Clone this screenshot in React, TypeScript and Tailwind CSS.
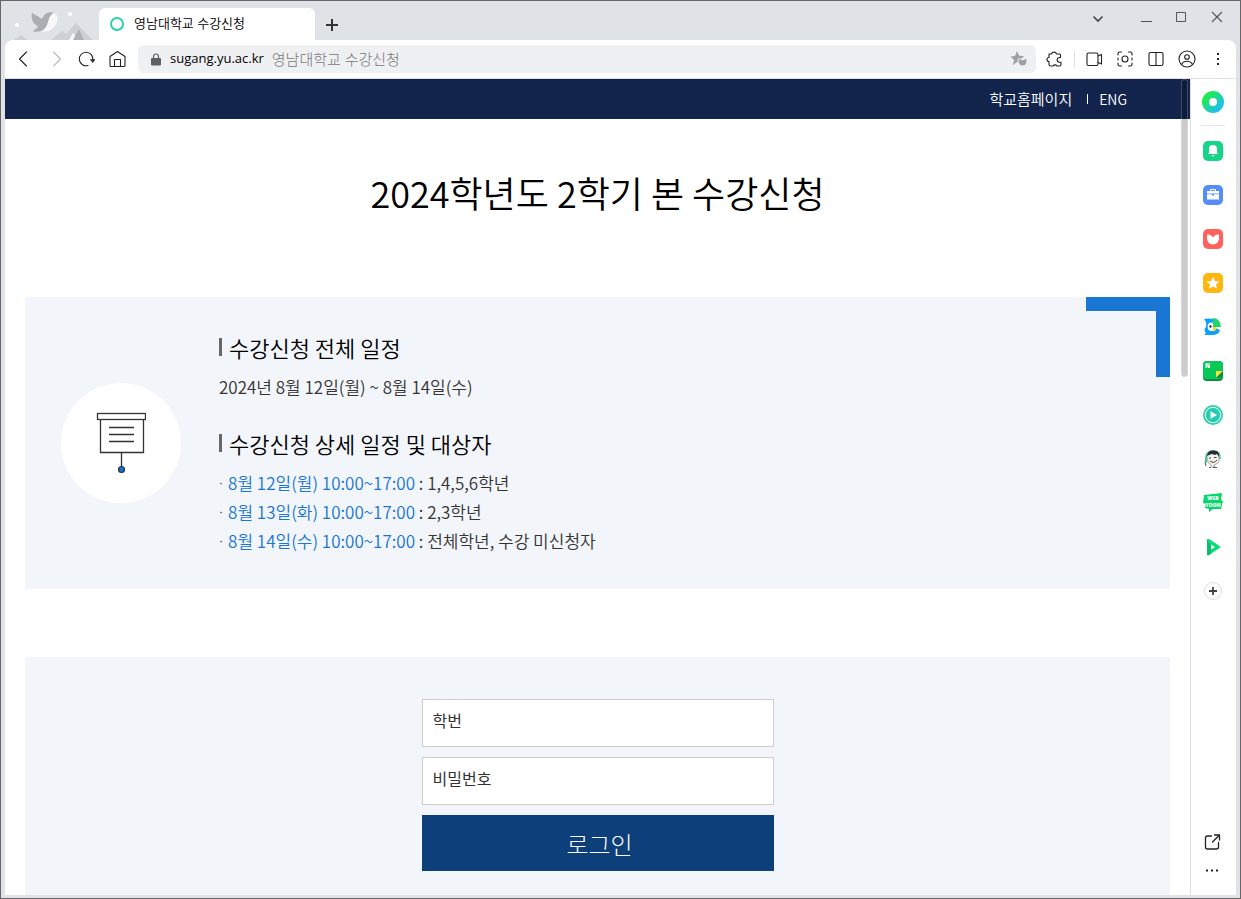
import { useState } from "react"
import type { ReactNode } from "react"

const schedule = [
  { time: "8월 12일(월) 10:00~17:00", target: "1,4,5,6학년" },
  { time: "8월 13일(화) 10:00~17:00", target: "2,3학년" },
  { time: "8월 14일(수) 10:00~17:00", target: "전체학년, 수강 미신청자" },
]

const line = {
  fill: "none",
  stroke: "#222",
  strokeWidth: 1.1,
  strokeLinecap: "round" as const,
  strokeLinejoin: "round" as const,
}

function IconButton({ label, className = "", children }: { label: string; className?: string; children: ReactNode }) {
  return (
    <button type="button" aria-label={label} className={`flex shrink-0 items-center justify-center ${className}`}>
      {children}
    </button>
  )
}

function WhaleArt() {
  return (
    <svg width="84" height="32" viewBox="0 0 84 32" className="self-end" aria-hidden="true">
      <path d="M5 32 L12 27 L19 32Z" fill="#cdd0d4" />
      <path d="M42 32 L53 23 L57 26 L67 15 L84 32Z" fill="#cdd0d4" />
      <path d="M60 32 L64 24.500 L69 32Z" fill="#f5f6f7" />
      <path d="M64 32 L70 21 L75 32Z" fill="#aeb1b5" />
      <path d="M40 5 C50 3 51 14 44 20 C41 23 36 24 31 23.500 C38 20 36 13 40 5Z" fill="#f8f8f9" />
      <path d="M23 4.500 C25 7 27 7 30 9 C32 11 33 11 34 9 C36 5 40 3.500 45 4.800 C40 7 40 12 38 17 C36 22 32 24.500 24 23.500 C24 22 28 21 29 18 C23 16 22 9 23 4.500Z" fill="#aaadb2" />
      <circle cx="61" cy="6" r="2" fill="#fff" />
      <circle cx="8" cy="17" r="2" fill="#fff" />
    </svg>
  )
}

function TitleBar() {
  return (
    <div className="flex h-[39px] shrink-0 items-stretch">
      <div className="flex w-[98px] shrink-0 pl-2">
        <WhaleArt />
      </div>
      <div className="mt-[7px] flex w-[216px] shrink-0 items-center gap-[10px] rounded-t-md bg-white pl-[11px]">
        <svg width="14" height="14" viewBox="0 0 14 14" aria-hidden="true">
          <circle cx="7" cy="7" r="6" fill="none" stroke="#27d3ad" strokeWidth="2" />
        </svg>
        <span className="text-[13px] font-[350] text-black">영남대학교 수강신청</span>
      </div>
      <IconButton label="새 탭" className="ml-[10px] mt-2 w-[14px]">
        <svg width="12" height="12" viewBox="0 0 12 12">
          <path d="M6 0V12M0 6H12" stroke="#333" strokeWidth="2" />
        </svg>
      </IconButton>
      <div className="ml-auto flex items-start pr-[17px] pt-[10px]">
        <IconButton label="탭 검색" className="mr-9 h-3 pt-[3px]">
          <svg width="12" height="8" viewBox="0 0 12 8">
            <path d="M1.500 1.500L6 6L10.500 1.500" fill="none" stroke="#444" strokeWidth="1.600" />
          </svg>
        </IconButton>
        <IconButton label="최소화" className="mr-[23px] h-3">
          <svg width="12" height="12" viewBox="0 0 12 12">
            <path d="M1 10.500H12" stroke="#555" />
          </svg>
        </IconButton>
        <IconButton label="최대화" className="mr-6 h-3">
          <svg width="12" height="12" viewBox="0 0 12 12">
            <path d="M1.500 1.500H10.500V10.500H1.500Z" fill="none" stroke="#555" />
          </svg>
        </IconButton>
        <IconButton label="닫기" className="h-3">
          <svg width="12" height="12" viewBox="0 0 12 12">
            <path d="M1 1L11 11M11 1L1 11" stroke="#555" strokeWidth="1.100" />
          </svg>
        </IconButton>
      </div>
    </div>
  )
}

function Toolbar() {
  return (
    <div className="flex h-[39px] shrink-0 items-center rounded-t-lg border-b border-[#dfe2e5] bg-white pl-[10px] pr-[9px]">
      <div className="flex items-center gap-[13px]">
        <IconButton label="뒤로">
          <svg width="18" height="18" viewBox="0 0 18 18" {...line}>
            <path d="M11.500 2L4.500 9L11.500 16" />
          </svg>
        </IconButton>
        <IconButton label="앞으로">
          <svg width="18" height="18" viewBox="0 0 18 18" {...line} stroke="#b9b9b9">
            <path d="M7.500 2L14.500 9L7.500 16" />
          </svg>
        </IconButton>
        <IconButton label="새로고침">
          <svg width="18" height="18" viewBox="0 0 18 18" {...line}>
            <path d="M11 15.500A6.800 6.800 0 1 1 15.800 10" />
            <path d="M13.500 9.500H18L15.800 12.500Z" fill="#222" strokeWidth="0.500" />
          </svg>
        </IconButton>
        <IconButton label="홈">
          <svg width="18" height="18" viewBox="0 0 18 18" {...line}>
            <path d="M2 6.500L9.500 1.500L17 6.500V15.500Q17 16.500 16 16.500H3Q2 16.500 2 15.500Z" />
            <path d="M6.500 16V9.500H12.500V16" />
          </svg>
        </IconButton>
      </div>

      {/* Address bar */}
      <div className="ml-3 flex h-7 min-w-0 flex-1 items-center rounded-md bg-[#eff0f2] pl-[13px] pr-2">
        <svg width="10" height="13" viewBox="0 0 10 13" className="mr-[9px] shrink-0" aria-hidden="true">
          <path d="M2.500 6V3.500A2.500 2.500 0 0 1 7.500 3.500V6" fill="none" stroke="#606060" strokeWidth="1.200" />
          <rect y="5" width="10" height="7.500" rx="1" fill="#606060" />
        </svg>
        <span className="whitespace-nowrap text-[13px] text-black">sugang.yu.ac.kr</span>
        <span className="ml-2 truncate text-[15px] font-light text-[#777]">영남대학교 수강신청</span>
        <IconButton label="즐겨찾기" className="ml-auto">
          <svg width="18" height="16" viewBox="0 0 18 16" fill="#a0a0a0">
            <path d="M7 0L9.200 4.800L14 5.300L10.500 8.500L11 13L7 11L3 14L4 9L0.500 5.500L5 5Z" />
            <path d="M8 8Q10 7 12.500 9Q15 7 17 8Q17.500 15 12.500 15Q8 15 8 8Z" stroke="#eff0f2" />
          </svg>
        </IconButton>
      </div>

      <div className="ml-[10px] flex items-center gap-[13px]">
        <IconButton label="확장앱">
          <svg width="18" height="18" viewBox="0 0 18 18" {...line}>
            <path d="M3 4H5.500A2.600 2.600 0 0 1 10.500 4H13.500Q14.500 4 14.500 5V7.500H13.500A2.300 2.300 0 0 0 13.500 12.200H15V14.500Q15 16 13.500 16H11A2.300 2.300 0 0 0 7 16H4.500Q3 16 3 14.500V11.500A2 2 0 0 1 3 7.500Z" />
          </svg>
        </IconButton>
        <div className="-mx-[3px] h-4 w-px bg-[#dcdfe2]" />
        <IconButton label="녹화">
          <svg width="18" height="18" viewBox="0 0 18 18" {...line}>
            <rect x="2" y="3" width="11" height="12.500" rx="1.500" />
            <path d="M13 6L16.500 4.500V14L13 12.500" />
          </svg>
        </IconButton>
        <IconButton label="캡처">
          <svg width="18" height="18" viewBox="0 0 18 18" {...line}>
            <path d="M2 5V3.500Q2 2 3.500 2H5.500M12.500 2H14.500Q16 2 16 3.500V5M16 13V14.500Q16 16 14.500 16H12.500M5.500 16H3.500Q2 16 2 14.500V13M2 8V10M16 8V10" />
            <circle cx="9" cy="9" r="3" />
          </svg>
        </IconButton>
        <IconButton label="사이드바">
          <svg width="18" height="18" viewBox="0 0 18 18" {...line}>
            <rect x="2" y="2.500" width="14" height="13" rx="1.500" />
            <path d="M9 2.500V15.500" />
          </svg>
        </IconButton>
        <IconButton label="프로필">
          <svg width="18" height="18" viewBox="0 0 18 18" {...line}>
            <circle cx="9" cy="9" r="8" />
            <circle cx="9" cy="7" r="2.300" />
            <path d="M3.500 14.500Q5 11.200 9 11.200T14.500 14.500" />
          </svg>
        </IconButton>
        <IconButton label="메뉴">
          <svg width="18" height="18" viewBox="0 0 18 18" fill="#222">
            <path d="M8 3H10V5H8ZM8 8H10V10H8ZM8 13H10V15H8Z" />
          </svg>
        </IconButton>
      </div>
    </div>
  )
}

const apps = [
  {
    label: "알림",
    icon: (
      <>
        <rect width="20" height="20" rx="5" fill="#16d488" />
        <path d="M10 4Q14 4 14 8V11.500L15 13H5L6 11.500V8Q6 4 10 4ZM8.500 14H11.500Q10 17 8.500 14Z" fill="#fff" />
      </>
    ),
  },
  {
    label: "도구",
    icon: (
      <>
        <rect width="20" height="20" rx="5" fill="#568cfa" />
        <path d="M7.500 6V4.500H12.500V6" fill="none" stroke="#fff" />
        <path d="M4 6H16V8.500H4ZM4 9.300H9V10.500H11V9.300H16V14.500H4Z" fill="#fff" />
      </>
    ),
  },
  {
    label: "쇼핑",
    icon: (
      <>
        <rect width="20" height="20" rx="5" fill="#ff625e" />
        <path d="M4 5.500Q8 5 10 8.500Q12 5 16 5.500Q17 15 10 15.500Q3 15 4 5.500Z" fill="#fff" />
      </>
    ),
  },
  {
    label: "즐겨찾기 모음",
    icon: (
      <>
        <rect width="20" height="20" rx="5" fill="#ffb60e" />
        <path d="M10 4L11.900 8L16.300 8.500L13 11.400L14 15.800L10 13.500L6 15.800L7 11.400L3.700 8.500L8.100 8Z" fill="#fff" />
      </>
    ),
  },
  {
    label: "파파고",
    icon: (
      <>
        <path d="M1 2Q5 1 10 2V10L17 13Q16 18 9 18H2Q1 17 3 16Q0 13 3 10Q4 5 1 2Z" fill="#0aa0ff" />
        <ellipse cx="8.500" cy="9.800" rx="3.800" ry="4.200" fill="#fff" />
        <path d="M10 1Q17 1 18 10H10Z" fill="#20d669" />
        <circle cx="7.500" cy="9.500" r="1.200" fill="#16356c" />
        <path d="M10 10H13Q14 13 11 14.500Q9.500 13 10 10Z" fill="#ffd51a" />
      </>
    ),
  },
  {
    label: "메모",
    icon: (
      <>
        <rect width="20" height="20" rx="4" fill="#078e3e" />
        <rect width="20" height="18" rx="4" fill="#08c858" />
        <text x="2" y="7" fontSize="6" fontWeight="900" fill="#fff">N</text>
        <path d="M13 17V10H20Z" fill="#ffdf38" />
        <path d="M13 17L20 10V14Q19 17 16 17Z" fill="#078e3e" />
      </>
    ),
  },
  {
    label: "동영상",
    icon: (
      <>
        <circle cx="10" cy="10" r="10" fill="#29d2a0" />
        <circle cx="10" cy="10" r="7.700" fill="#25cbb2" stroke="#fff" />
        <path d="M7.500 6.200L14 10L7.500 13.800Z" fill="#fff" />
      </>
    ),
  },
  {
    label: "오디오",
    icon: (
      <>
        <path d="M3 11Q2 2 10 2T17 10" fill="none" stroke="#32c985" strokeWidth="1.500" />
        <path d="M4 7Q4 3 9 2.500Q15 1.500 16 7V12Q15 15 11 16L11.500 18H9L8 16Q4 14 4 7Z" fill="#f5eeea" stroke="#888" strokeWidth="0.700" />
        <path d="M4 7Q5 1 10 1.500Q17 1 16 8L14 5L12 6L9 5L6 6Z" fill="#292c38" />
        <path d="M6 9H8M11 8.500H13.500M7 12Q11 15 14 11" fill="none" stroke="#333" strokeWidth="0.900" />
        <path d="M2 9V13L4 14V9Z" fill="#36c98a" />
        <path d="M2 13L3 17M6 18.500H8M10 18.500H14" stroke="#555" />
      </>
    ),
  },
  {
    label: "웹툰",
    icon: (
      <>
        <path d="M1 2L19 0L18 7L20 8L18 16H10L6 19V16L2 15L3 11L0 10Z" fill="#07d768" />
        <text x="10" y="7" textAnchor="middle" fontSize="5" fontWeight="900" fill="#fff">WEB</text>
        <text x="10" y="14" textAnchor="middle" fontSize="5" fontWeight="900" fill="#fff">TOON</text>
      </>
    ),
  },
  {
    label: "시리즈온",
    icon: (
      <>
        <path d="M4 3Q4 1 6 2L16.500 9Q18 10 16.500 11L6 18Q4 19 4 17Z" fill="#08de73" />
        <path d="M4 3V17Q4 19 6 18L8 16.700V9Z" fill="#08bd68" />
        <path d="M8 7.500L12 10L8 12.500Z" fill="#fff" />
      </>
    ),
  },
]

function SideBar() {
  return (
    <aside className="flex w-[46px] shrink-0 flex-col items-center border-l border-[#dfe2e5] bg-white pb-[18px] pr-0.5 pt-3">
      <IconButton label="웨일">
        <svg width="22" height="22" viewBox="0 0 22 22">
          <defs>
            <linearGradient id="ring" x1="0" y1="0" x2="1" y2="1">
              <stop offset="0.150" stopColor="#1dea52" />
              <stop offset="0.900" stopColor="#20c0ee" />
            </linearGradient>
          </defs>
          <circle cx="11" cy="11" r="7.500" fill="none" stroke="url(#ring)" strokeWidth="7" />
        </svg>
      </IconButton>
      <div className="mt-3 h-px w-6 bg-[#e2e4e6]" />
      <div className="mt-[15px] flex flex-col gap-6">
        {apps.map((app) => (
          <IconButton key={app.label} label={app.label}>
            <svg width="20" height="20" viewBox="0 0 20 20">
              {app.icon}
            </svg>
          </IconButton>
        ))}
        <IconButton label="추가">
          <svg width="20" height="20" viewBox="0 0 20 20">
            <circle cx="10" cy="10" r="8.500" fill="#fff" stroke="#ddd" />
            <path d="M10 6V14M6 10H14" stroke="#3f4347" strokeWidth="1.800" />
          </svg>
        </IconButton>
      </div>
      <IconButton label="새 창으로 열기" className="mt-auto">
        <svg width="18" height="18" viewBox="0 0 18 18" {...line} strokeWidth={1.3}>
          <path d="M7.500 3H3.500Q1.500 3 1.500 5V14Q1.500 16 3.500 16H12.500Q14.500 16 14.500 14V9.500M10.500 2H15.500V7M15.500 2L8.500 9" />
        </svg>
      </IconButton>
      <IconButton label="더보기" className="mt-3">
        <svg width="14" height="14" viewBox="0 0 14 14" fill="#222">
          <path d="M0 6.500H2V8.500H0ZM5 6.500H7V8.500H5ZM10 6.500H12V8.500H10Z" />
        </svg>
      </IconButton>
    </aside>
  )
}

function SectionTitle({ children }: { children: ReactNode }) {
  return (
    <h2 className="flex items-center gap-[7px] text-[22px] font-[350] leading-[30px] text-black">
      <span className="h-[18px] w-[3px] bg-[#666]" />
      {children}
    </h2>
  )
}

function Page() {
  const [studentId, setStudentId] = useState("")
  const [password, setPassword] = useState("")

  return (
    <div className="min-w-0 flex-1 overflow-hidden bg-white font-['Noto_Sans_CJK_KR',sans-serif]">
      <header className="flex h-10 items-center justify-end gap-[11px] bg-[#12244b] pr-[63px] text-[15px] font-[350] leading-5 text-white">
        <a href="#home">학교홈페이지</a>
        <span className="ml-1 h-[10px] w-px bg-white" />
        <a href="#eng" className="text-sm leading-5">ENG</a>
      </header>

      <main className="px-5">
        <h1 className="pb-[81px] pt-[49px] text-center text-[36px] font-[350] leading-[48px] text-black">
          2024학년도 2학기 본 수강신청
        </h1>

        {/* Schedule */}
        <section className="flex h-[292px] items-center bg-[#f2f5fa]">
          <div className="ml-9 flex size-[120px] shrink-0 items-center justify-center rounded-full bg-white">
            <svg width="50" height="62" viewBox="0 0 50 62" fill="none" stroke="#333" aria-hidden="true">
              <path d="M4.500 7V40.500H47.500V7" strokeWidth="1.300" />
              <rect x="1.500" y="1.500" width="48" height="6" fill="#fff" strokeWidth="1.300" />
              <path d="M13 15.500H38M13 22.500H38M13 29.500H38M25.500 40.500V55" strokeWidth="1.300" />
              <circle cx="25.500" cy="57.500" r="3" fill="#0875dc" strokeWidth="1.200" />
            </svg>
          </div>
          <div className="ml-[38px] flex-1 text-[17px] leading-[29px] text-[#333]">
            <SectionTitle>수강신청 전체 일정</SectionTitle>
            <p className="mt-[10px] font-[350]">2024년 8월 12일(월) ~ 8월 14일(수)</p>
            <div className="mt-[27px]">
              <SectionTitle>수강신청 상세 일정 및 대상자</SectionTitle>
            </div>
            <ul className="mt-[10px] font-[350]">
              {schedule.map((item) => (
                <li key={item.time} className="flex gap-[5px]">
                  <span className="font-['Open_Sans',sans-serif]">·</span>
                  <p>
                    <span className="text-[#1976d2]">{item.time}</span> : {item.target}
                  </p>
                </li>
              ))}
            </ul>
          </div>
          <div className="h-20 w-[84px] self-start border-r-[14px] border-t-[14px] border-[#1976d2]" />
        </section>

        {/* Login */}
        <section className="mt-[68px] bg-[#f2f5fa] pb-16 pt-[42px]">
          <form className="mx-auto flex w-[352px] flex-col gap-[10px]" onSubmit={(e) => e.preventDefault()}>
            <input
              type="text"
              aria-label="학번"
              placeholder="학번"
              value={studentId}
              onChange={(e) => setStudentId(e.target.value)}
              className="h-12 border border-[#ccc] bg-white px-[10px] pb-1.5 text-[16px] text-[#333] placeholder:text-[#333]"
            />
            <input
              type="password"
              aria-label="비밀번호"
              placeholder="비밀번호"
              value={password}
              onChange={(e) => setPassword(e.target.value)}
              className="h-12 border border-[#ccc] bg-white px-[10px] pb-1.5 text-[16px] text-[#333] placeholder:text-[#333]"
            />
            <button type="submit" className="h-14 bg-[#0d3f7a] pl-1 pt-0.5 text-[24px] font-light text-white">
              로그인
            </button>
          </form>
        </section>
      </main>
    </div>
  )
}

export default function App() {
  return (
    <div className="flex h-screen flex-col overflow-hidden border border-[#666] bg-[#dfe2e7] font-['Open_Sans','Noto_Sans_CJK_KR',sans-serif]">
      <TitleBar />
      <div className="flex min-h-0 flex-1 flex-col px-1 pb-[3px]">
        <Toolbar />
        <div className="flex min-h-0 flex-1">
          <div className="relative flex min-w-0 flex-1">
            <Page />
            {/* Scrollbar thumb */}
            <div className="absolute right-[2px] top-0 h-[298px] w-[7px] rounded-full border border-white/20 bg-black/20" />
          </div>
          <SideBar />
        </div>
      </div>
    </div>
  )
}
